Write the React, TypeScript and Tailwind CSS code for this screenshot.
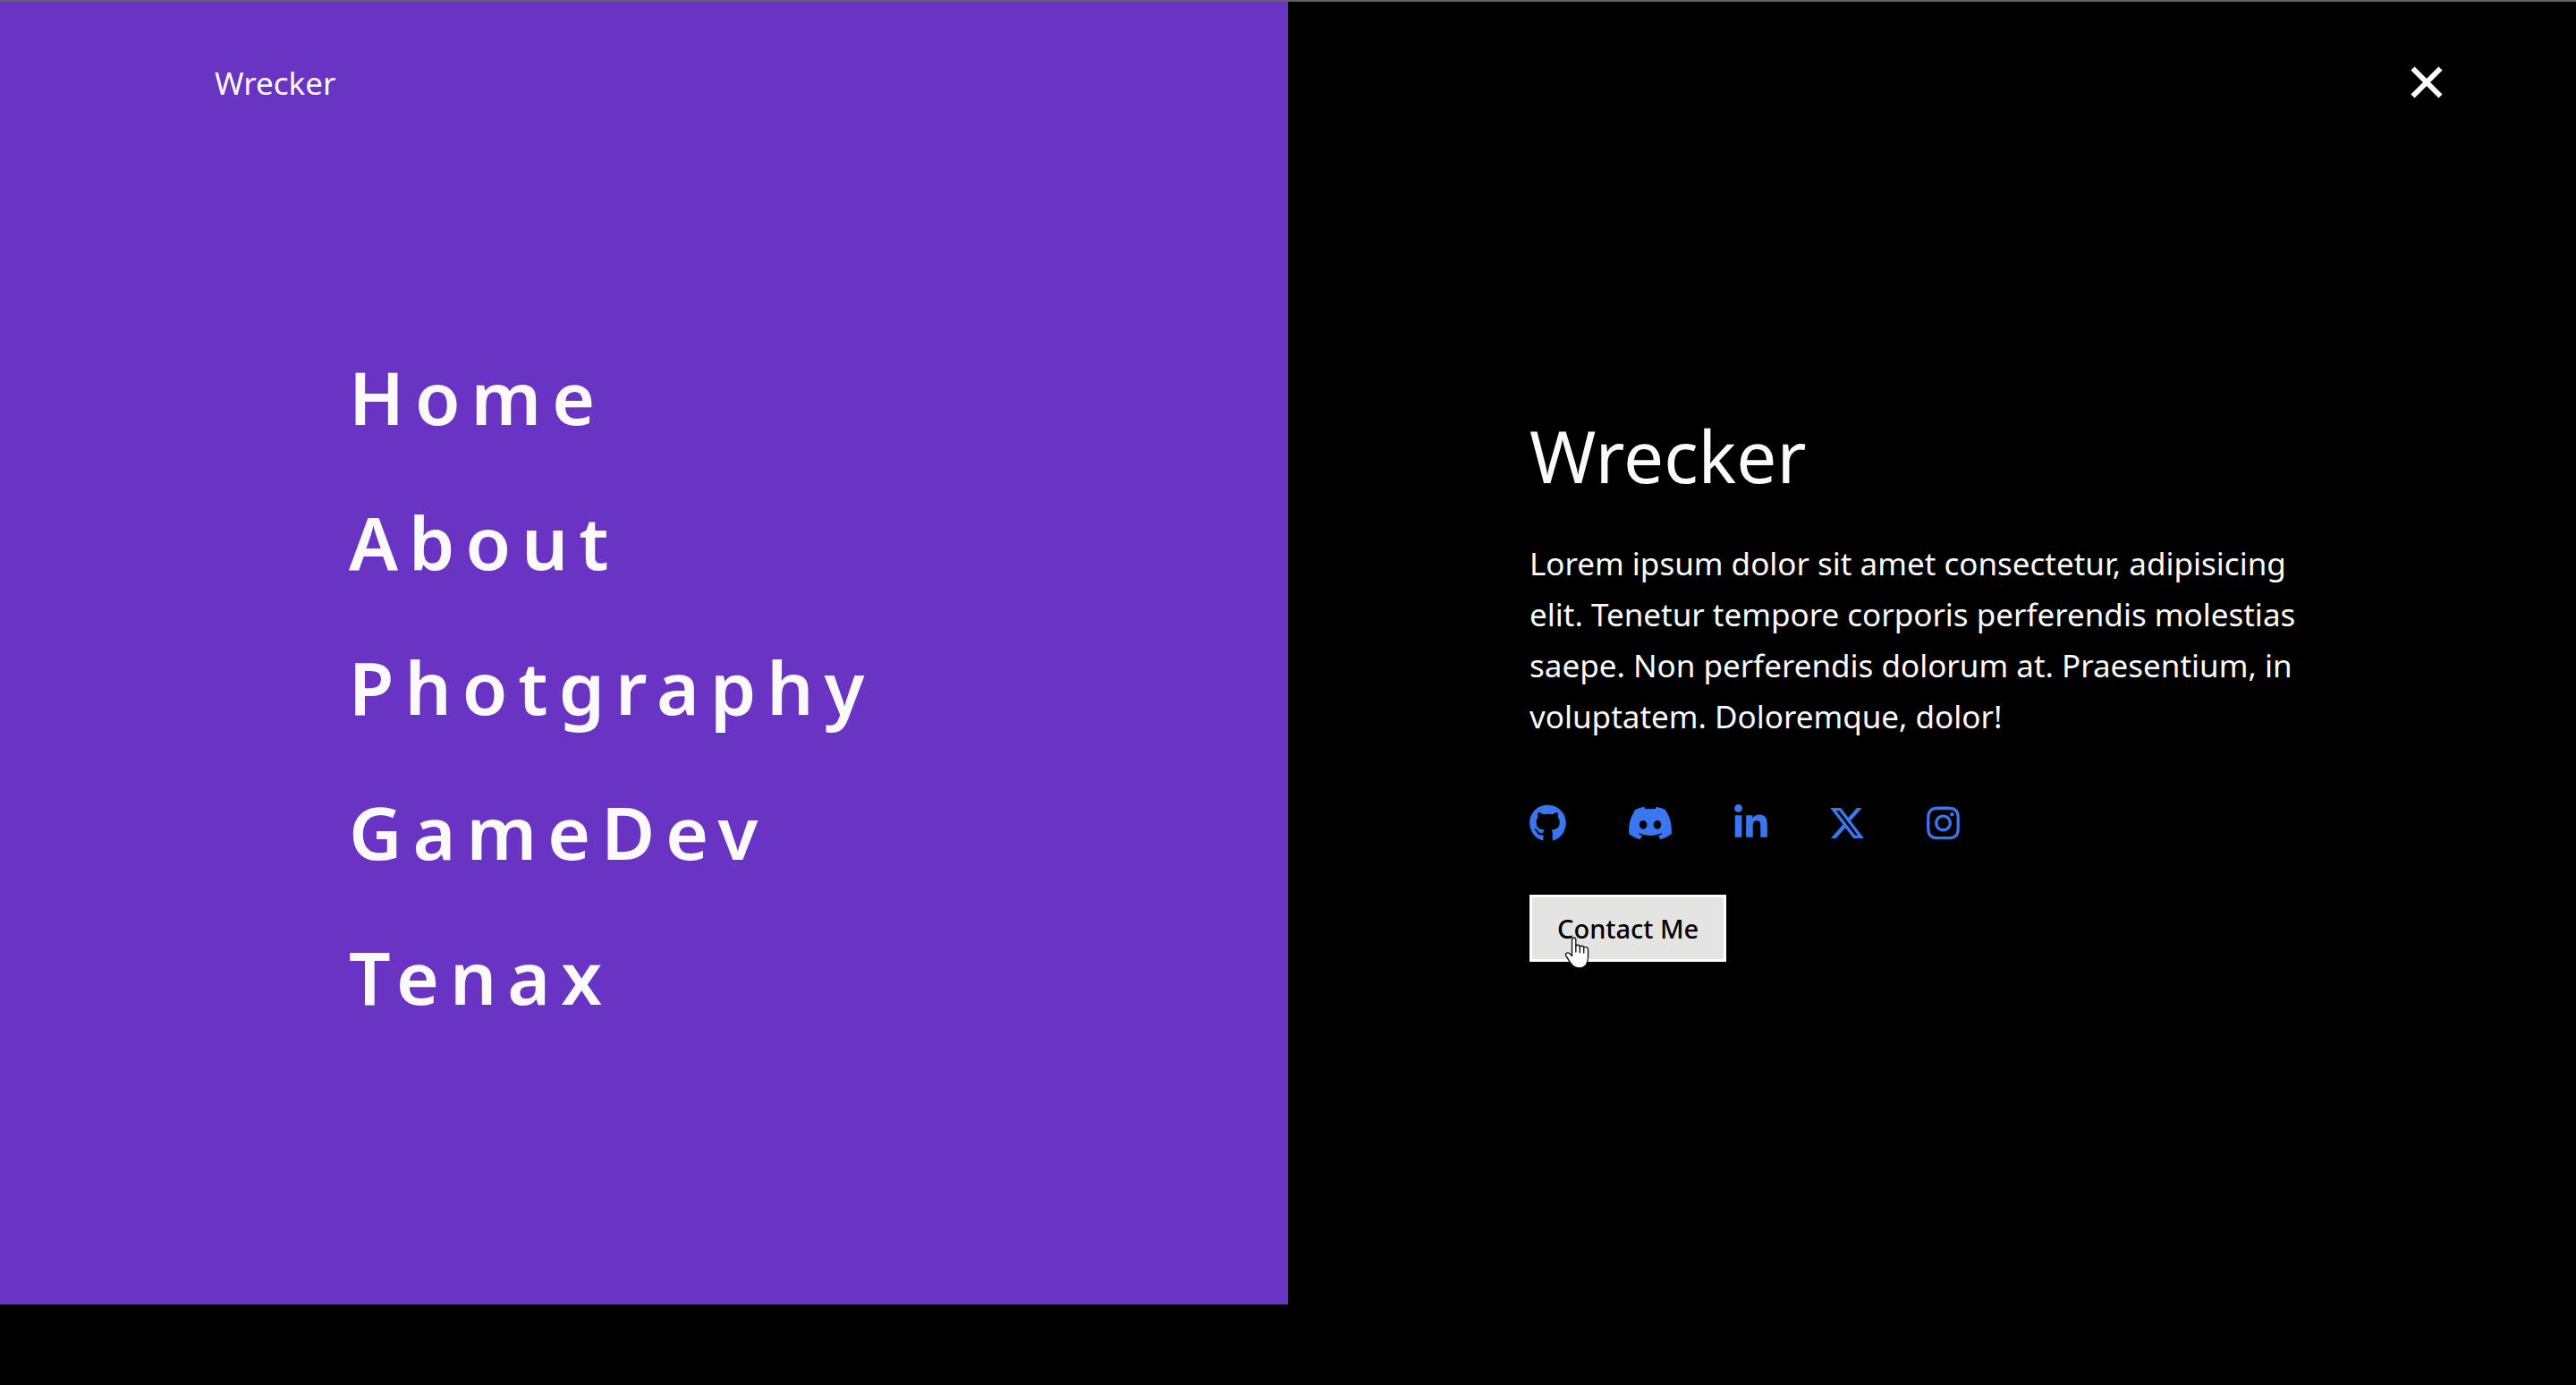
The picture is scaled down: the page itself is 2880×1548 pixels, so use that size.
import type { ComponentType } from "react";
import { FaDiscord, FaGithub, FaInstagram, FaLinkedinIn, FaXTwitter } from "react-icons/fa6";

const menu = ["Home", "About", "Photgraphy", "GameDev", "Tenax"];

const socials: { label: string; Icon: ComponentType<{ className?: string }>; size: string }[] = [
  { label: "GitHub", Icon: FaGithub, size: "h-[42px] w-[41px]" },
  { label: "Discord", Icon: FaDiscord, size: "h-[42px] w-[52px]" },
  { label: "LinkedIn", Icon: FaLinkedinIn, size: "h-[42px] w-[37px]" },
  { label: "X", Icon: FaXTwitter, size: "h-[42px] w-[42px]" },
  { label: "Instagram", Icon: FaInstagram, size: "h-[42px] w-[37px]" },
];

function CloseIcon() {
  return (
    <svg viewBox="0 0 36 36" className="size-9" fill="none" stroke="currentColor" strokeWidth="6" aria-hidden="true">
      <path d="M2.5 2.5 33.5 33.5M33.5 2.5 2.5 33.5" />
    </svg>
  );
}

function HandPointer() {
  return (
    <svg
      viewBox="0 0 27 36"
      className="pointer-events-none absolute top-11 left-9 h-9 w-7"
      fill="#fff"
      stroke="#15151c"
      strokeWidth="1.4"
      strokeLinejoin="round"
      strokeLinecap="round"
      aria-hidden="true"
    >
      <path d="M8 20V3.2C8 .2 12.300 .2 12.300 3.200V10.500C13 8.600 16.600 8.900 16.800 11.200C17.600 9.600 20.800 10 21.200 12.200C22.400 10.800 26 11.200 26 14.400V22C26 29 23 35 16 35C10.500 35 8.500 32.500 6.500 29.500C4.800 27 3.500 24.500 1.500 21.500C-.2 18.800 2.800 17 5 18.500C6.200 19.300 7 20.200 8 21.500Z" />
      <path d="M12.300 10V17M16.800 11V17.500M21.200 12V18" />
    </svg>
  );
}

export default function App() {
  return (
    <div className="min-h-screen border-t-2 border-[#636066] bg-black font-['Noto_Sans',sans-serif] text-[#fafafa]">
      <div className="grid min-h-[calc(100vh-92px)] grid-cols-2">
        <section className="flex flex-col bg-[#6933c3]">
          <header className="px-60 pt-16">
            <a href="#top" className="text-[35px] leading-[54px]">
              Wrecker
            </a>
          </header>
          <nav aria-label="Main" className="flex grow flex-col justify-center pb-11 pl-[390px]">
            <ul>
              {menu.map((item) => (
                <li key={item}>
                  <a
                    href={"#" + item.toLowerCase()}
                    className="text-[82px] leading-[162px] font-semibold tracking-[12px] [font-kerning:normal]"
                  >
                    {item}
                  </a>
                </li>
              ))}
            </ul>
          </nav>
        </section>

        <section className="flex flex-col">
          <div className="flex justify-end pt-[72px] pr-[149px]">
            <button type="button" aria-label="Close menu" className="text-white">
              <CloseIcon />
            </button>
          </div>
          <div className="flex grow flex-col items-start justify-center pr-60 pb-10 pl-[270px]">
            <h1 className="text-[80px] leading-[112px]">Wrecker</h1>
            <p className="mt-9 w-[870px] max-w-full text-[35px] leading-[57px]">
              Lorem ipsum dolor sit amet consectetur, adipisicing elit. Tenetur tempore corporis perferendis molestias
              saepe. Non perferendis dolorum at. Praesentium, in voluptatem. Doloremque, dolor!
            </p>
            <ul className="mt-[70px] flex gap-[68px] text-[#3a76f0]">
              {socials.map(({ label, Icon, size }) => (
                <li key={label}>
                  <a href={"#" + label.toLowerCase()} aria-label={label} className="block">
                    <Icon className={size} />
                  </a>
                </li>
              ))}
            </ul>
            <button
              type="button"
              className="relative mt-[59px] border-3 border-white bg-[#e4e4e3] px-7 text-[29px] leading-[69px] font-medium text-black"
            >
              Contact Me
              <HandPointer />
            </button>
          </div>
        </section>
      </div>
    </div>
  );
}
